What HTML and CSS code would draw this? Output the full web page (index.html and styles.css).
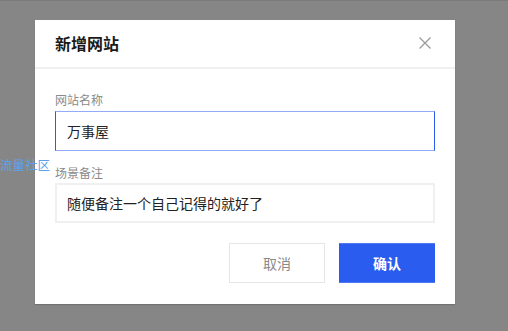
FILE: index.html
```html
<!DOCTYPE html>
<html lang="zh">
<head>
<meta charset="utf-8">
<title>新增网站</title>
<link rel="stylesheet" href="styles.css">
</head>
<body>
<div class="page">
  <div class="modal">
    <div class="modal-header">
      <div class="modal-title">新增网站</div>
      <svg class="close" width="12" height="12" viewBox="0 0 12 12"><path d="M0.5 0.5 L11.5 11.5 M11.5 0.5 L0.5 11.5" stroke="#9a9a9a" stroke-width="1.3" fill="none"/></svg>
    </div>
    <div class="modal-body">
      <div class="field">
        <div class="label">网站名称</div>
        <div class="input input-focus">万事屋</div>
      </div>
      <div class="field field-second">
        <div class="label">场景备注</div>
        <div class="input">随便备注一个自己记得的就好了</div>
      </div>
      <div class="actions">
        <div class="btn btn-cancel">取消</div>
        <div class="btn btn-ok">确认</div>
      </div>
    </div>
  </div>
  <div class="behind-link">流量社区</div>
</div>
</body>
</html>
```
FILE: styles.css
```css
html, body {
  margin: 0;
  padding: 0;
}
body {
  background: #868686;
  font-family: "Noto Sans CJK SC", "Noto Sans", sans-serif;
  width: 508px;
  height: 331px;
  overflow: hidden;
}
.page {
  position: relative;
  height: 331px;
  padding: 20px 0 0 35px;
  box-sizing: border-box;
  border-top: 1px solid #7a7a7a;
}
.modal {
  width: 420px;
  background: #fff;
  margin-top: -1px;
  box-shadow: 0 1px 1px rgba(0,0,0,0.15);
}
.modal-header {
  height: 47px;
  display: flex;
  align-items: center;
  justify-content: space-between;
  padding: 0 24px 0 20px;
  border-bottom: 2px solid #f0f0f0;
}
.modal-title {
  font-size: 16px;
  font-weight: 700;
  color: #1a1a1a;
  margin-top: -1px;
}
.close {
  display: block;
  margin-top: -1px;
}
.modal-body {
  padding: 21px 20px 21px 20px;
}
.label {
  font-size: 12px;
  line-height: 20px;
  color: #8a8a8a;
  margin-bottom: 1px;
}
.field-second {
  margin-top: 12px;
}
.field-second .label {
  margin-bottom: 0;
}
.input {
  height: 40px;
  box-sizing: border-box;
  border: 2px solid #f0f0f0;
  padding: 0 10px;
  font-size: 14px;
  color: #222;
  display: flex;
  align-items: center;
}
.input-focus {
  border: 1px solid;
  border-color: #93abf6 #2b5cf0 #93abf6 #2b5cf0;
  padding-left: 11px;
}
.actions {
  display: flex;
  justify-content: flex-end;
  gap: 14px;
  margin-top: 20px;
}
.btn {
  width: 96px;
  height: 40px;
  box-sizing: border-box;
  display: flex;
  align-items: center;
  justify-content: center;
  font-size: 14px;
}
.btn-cancel {
  border: 1px solid #e6e6e6;
  color: #8a8a8a;
}
.btn-ok {
  background: #2a5cef;
  color: #fff;
  font-weight: 700;
  border-top: 1px solid #4f7af2;
  border-bottom: 1px solid #4f7af2;
}
.behind-link {
  position: absolute;
  left: 0;
  top: 156px;
  font-size: 12.5px;
  line-height: 16px;
  color: #5aa2f0;
}
```
